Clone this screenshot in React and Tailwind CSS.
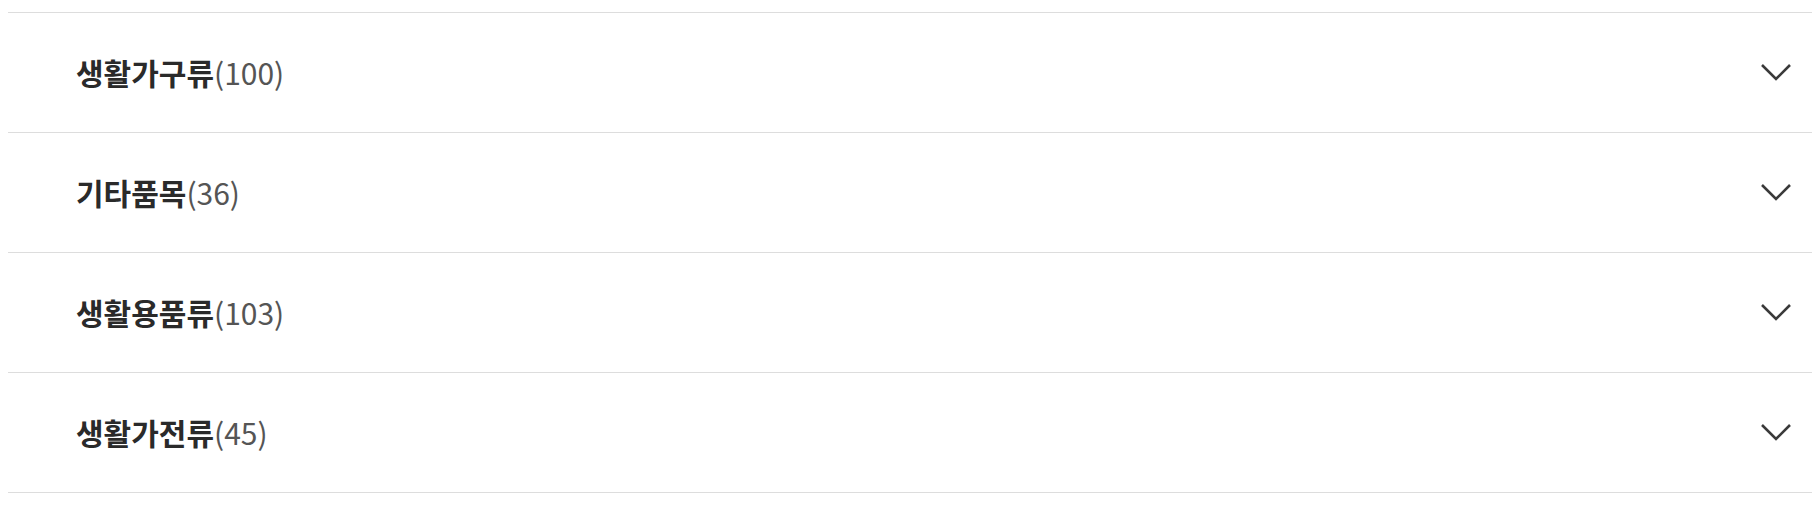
import React from 'react';

const categories = [
  { name: '생활가구류', count: 100 },
  { name: '기타품목', count: 36 },
  { name: '생활용품류', count: 103 },
  { name: '생활가전류', count: 45 },
];

function Chevron() {
  return (
    <svg width="32" height="20" viewBox="0 0 32 20" fill="none" className="text-[#3a3a3a]">
      <path d="M2 3 L16 17 L30 3" stroke="currentColor" strokeWidth="2.6" strokeLinecap="butt" strokeLinejoin="miter" />
    </svg>
  );
}

export default function App() {
  return (
    <div className="bg-white pt-3 pb-3" style={{ fontFamily: '"Noto Sans CJK KR", "Noto Sans", sans-serif' }}>
      <ul className="mx-2 border-b border-[#dddddd]">
        {categories.map(c => (
          <li key={c.name} className="border-t border-[#dddddd]">
            <button className="w-full h-[119px] flex items-center justify-between pl-[68px] pr-[20px] pb-[2px] text-left">
              <span className="text-[30px] leading-none">
                <b className="font-bold text-[#2a2a2a]">{c.name}</b>
                <span className="text-[#555555] font-normal">({c.count})</span>
              </span>
              <Chevron />
            </button>
          </li>
        ))}
      </ul>
    </div>
  );
}
